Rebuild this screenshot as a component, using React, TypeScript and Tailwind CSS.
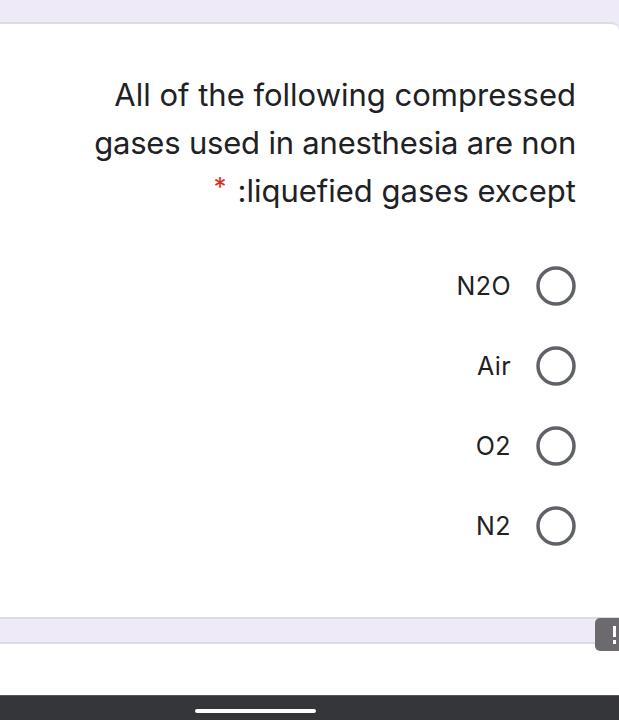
import React from "react";

const options = ["N2O", "Air", "O2", "N2"];

function Radio() {
  return (
    <svg width="40" height="40" viewBox="0 0 40 40" className="shrink-0">
      <circle cx="20" cy="20" r="18" fill="none" stroke="#5f6368" strokeWidth="3.5" />
    </svg>
  );
}

export default function App() {
  return (
    <div
      className="w-[619px] h-[720px] bg-[#eeeaf7] flex flex-col overflow-hidden relative"
      style={{ fontFamily: "Inter, Roboto, 'Noto Sans', sans-serif" }}
    >
      <div className="h-[22px] shrink-0" />
      <div className="h-[595px] shrink-0 bg-white border-t-2 border-[#dadce0] rounded-tr-[8px] -ml-[10px] flex flex-col items-end pr-[43px]">
        <div className="mt-[47px] flex flex-col items-end text-[31px] leading-[48px] text-[#202124]">
          <div>All of the following compressed</div>
          <div className="tracking-[-0.2px]">gases used in anesthesia are non</div>
          <div className="flex items-start">
            <span className="text-[#d93025] text-[26px] leading-[40px] mr-[11px]">*</span>
            <span>:liquefied gases except</span>
          </div>
        </div>
        <div className="mt-[51px] flex flex-col gap-[40px]">
          {options.map((o) => (
            <div key={o} className="flex items-center justify-end gap-[25px]">
              <span className="text-[25px] leading-[40px] text-[#202124] tracking-[0.4px]">{o}</span>
              <Radio />
            </div>
          ))}
        </div>
      </div>
      <div className="h-[25px] shrink-0 border-t-2 border-[#dadce0]" />
      <div className="h-[53px] shrink-0 bg-white border-t-2 border-[#dadce0] rounded-tr-[8px] -ml-[10px]" />
      <div className="h-[25px] shrink-0 bg-[#35363a] border-t border-[#55565a] flex items-center">
        <div className="ml-[195px] w-[121px] h-[4px] rounded-full bg-white mt-[5px]" />
      </div>
      <div className="absolute left-[595px] top-[618px] w-[30px] h-[33px] rounded-[5px] bg-[#6c6a6f] flex items-center pl-[18px]">
        <div className="flex flex-col items-center gap-[3px]">
          <div className="w-[3px] h-[11px] bg-white" />
          <div className="w-[3px] h-[4px] bg-white" />
        </div>
      </div>
    </div>
  );
}
